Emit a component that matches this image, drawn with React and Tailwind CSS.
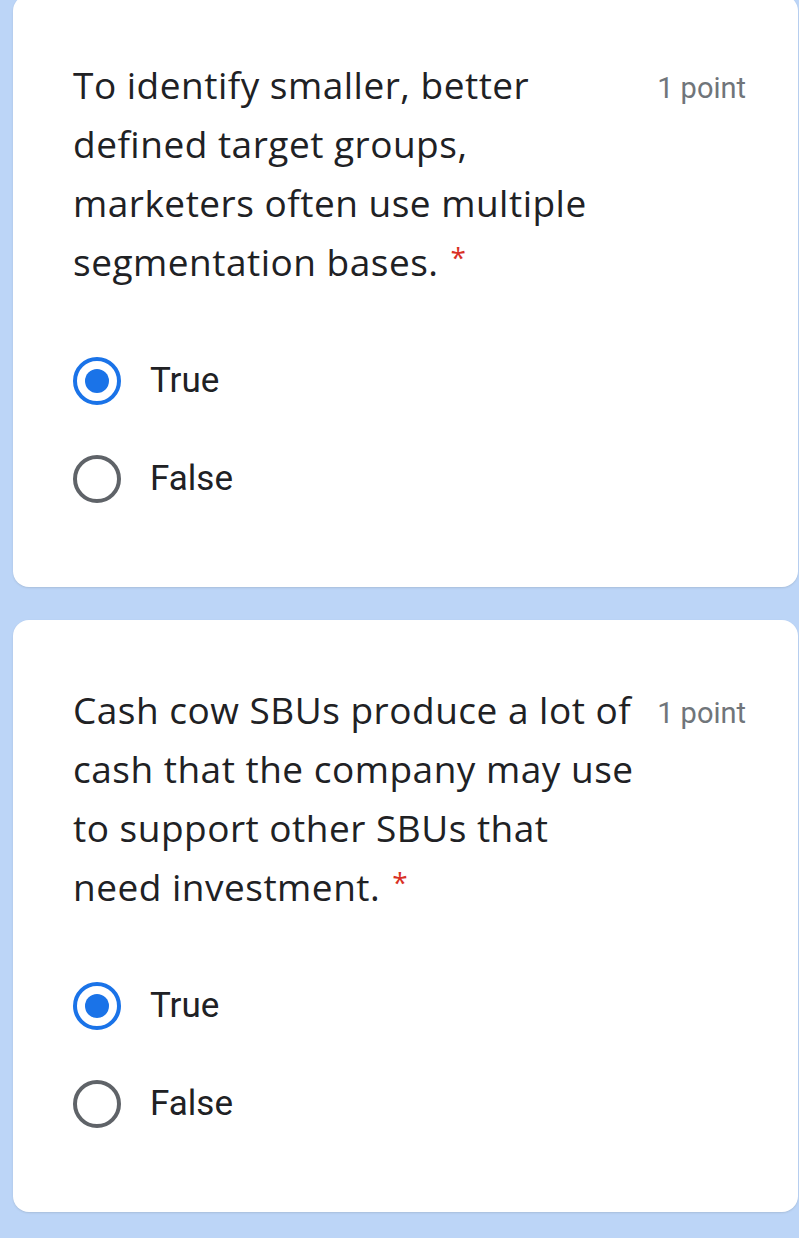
import React from "react";

function Radio({ checked }) {
  return checked ? (
    <svg width="52" height="52" viewBox="0 0 52 52">
      <circle cx="26" cy="26" r="22" fill="none" stroke="#1a73e8" strokeWidth="4" />
      <circle cx="26" cy="26" r="12" fill="#1a73e8" />
    </svg>
  ) : (
    <svg width="52" height="52" viewBox="0 0 52 52">
      <circle cx="26" cy="26" r="22" fill="none" stroke="#5f6368" strokeWidth="4" />
    </svg>
  );
}

function Option({ label, checked }) {
  return (
    <div className="flex items-center h-[98px]">
      <div className="ml-[-2px]">
        <Radio checked={checked} />
      </div>
      <span className="ml-[27px] text-[35px] text-[#202124] font-['Roboto',sans-serif]">{label}</span>
    </div>
  );
}

function Card({ lines, className }) {
  return (
    <div className={`ml-[13px] w-[785px] h-[592px] bg-white rounded-[16px] shadow-[0_1px_2px_rgba(60,64,67,0.15)] pl-[60px] pr-[52px] pt-[60px] ${className || ""}`}>
      <div className="flex items-start">
        <div className="flex-1 text-[37px] leading-[59px] text-[#202124] font-['Open_Sans',sans-serif] tracking-[0.5px]">
          {lines.map((l, i) => (
            <div key={i} className="whitespace-nowrap">
              {l}
              {i === lines.length - 1 && (
                <span className="text-[#d93025] ml-[12px] text-[28px] relative top-[-8px]">*</span>
              )}
            </div>
          ))}
        </div>
        <div className="shrink-0 mt-[12px] text-[29px] text-[#70757a] font-['Roboto',sans-serif]">1 point</div>
      </div>
      <div className="mt-[37px] flex flex-col">
        <Option label="True" checked />
        <Option label="False" />
      </div>
    </div>
  );
}

export default function App() {
  return (
    <div className="w-[799px] h-[1238px] bg-[#bcd5f7] overflow-hidden">
      <Card
        className="mt-[-5px]"
        lines={["To identify smaller, better", "defined target groups,", "marketers often use multiple", "segmentation bases."]}
      />
      <Card
        className="mt-[33px]"
        lines={["Cash cow SBUs produce a lot of", "cash that the company may use", "to support other SBUs that", "need investment."]}
      />
    </div>
  );
}
